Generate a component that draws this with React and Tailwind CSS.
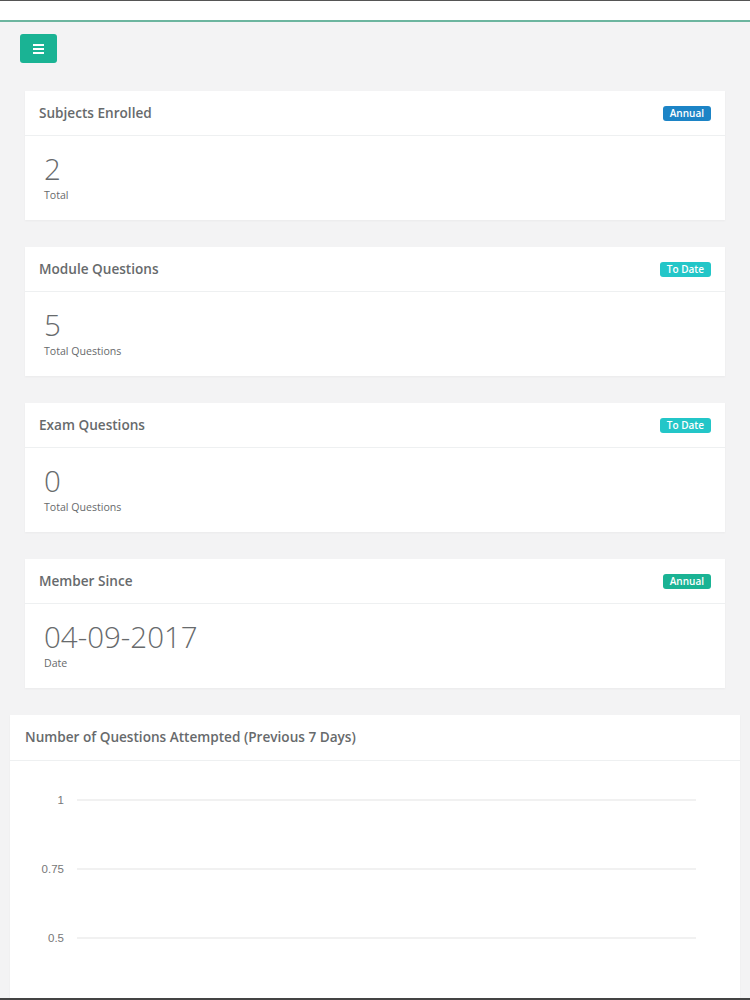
import React from "react";

const badgeColors = {
  blue: "bg-[#1c84c6]",
  cyan: "bg-[#23c6c8]",
  green: "bg-[#1ab394]",
};

const StatCard = ({ title, badge, color, value, label }) => (
  <div className="bg-white shadow-[0_1px_2px_rgba(0,0,0,0.04)]">
    <div className="flex h-[45px] items-center justify-between border-b border-[#eef0f1] px-[14px]">
      <h5 className="text-[13.6px] font-semibold text-[#676a6c]">{title}</h5>
      <span
        className={`${badgeColors[color]} rounded-[3px] px-[7px] py-[1px] text-[10px] font-semibold leading-[13px] text-white`}
      >
        {badge}
      </span>
    </div>
    <div className="h-[84px] px-[19px] pt-[13px]">
      <div className="text-[29.5px] font-light leading-[39px] text-[#676a6c]">{value}</div>
      <div className="text-[10.6px] leading-[14px] text-[#676a6c]">{label}</div>
    </div>
  </div>
);

const Chart = () => {
  const rows = [
    { label: "1", y: 39 },
    { label: "0.75", y: 108 },
    { label: "0.5", y: 177 },
  ];
  return (
    <svg width="730" height="240" className="block">
      {rows.map((r) => (
        <g key={r.label}>
          <line x1="67" x2="686" y1={r.y} y2={r.y} stroke="#e3e3e3" strokeWidth="1" />
          <text
            x="54"
            y={r.y + 4}
            textAnchor="end"
            fontSize="11.5"
            fill="#777"
            fontFamily="'Liberation Sans', Arial, sans-serif"
          >
            {r.label}
          </text>
        </g>
      ))}
    </svg>
  );
};

export default function App() {
  const cards = [
    { title: "Subjects Enrolled", badge: "Annual", color: "blue", value: "2", label: "Total" },
    { title: "Module Questions", badge: "To Date", color: "cyan", value: "5", label: "Total Questions" },
    { title: "Exam Questions", badge: "To Date", color: "cyan", value: "0", label: "Total Questions" },
    { title: "Member Since", badge: "Annual", color: "green", value: "04-09-2017", label: "Date" },
  ];

  return (
    <div
      className="flex h-[1000px] flex-col overflow-hidden bg-[#f3f3f4]"
      style={{ fontFamily: "'Open Sans', 'Noto Sans', sans-serif" }}
    >
      {/* top bar */}
      <div className="h-[22px] shrink-0 border-t border-[#555] border-b-2 border-b-[#6cb59f] bg-white" />

      <div className="flex-1 overflow-hidden">
        <div className="px-[20px] pt-[12px]">
          <button className="flex h-[29px] w-[37px] items-center justify-center rounded-[3px] bg-[#1ab394]">
            <svg width="11" height="10" viewBox="0 0 11 10">
              <rect x="0" y="0" width="11" height="2" fill="#fff" />
              <rect x="0" y="4" width="11" height="2" fill="#fff" />
              <rect x="0" y="8" width="11" height="2" fill="#fff" />
            </svg>
          </button>
        </div>

        <div className="flex flex-col gap-[27px] px-[25px] pt-[28px]">
          {cards.map((c) => (
            <StatCard key={c.title} {...c} />
          ))}
        </div>

        <div className="mx-[10px] mt-[27px] bg-white shadow-[0_1px_2px_rgba(0,0,0,0.04)]">
          <div className="flex h-[46px] items-center border-b border-[#eef0f1] px-[15px]">
            <h5 className="text-[13.6px] font-semibold text-[#676a6c]">
              Number of Questions Attempted (Previous 7 Days)
            </h5>
          </div>
          <Chart />
        </div>
      </div>

      <div className="h-[2px] shrink-0 bg-[#444]" />
    </div>
  );
}
